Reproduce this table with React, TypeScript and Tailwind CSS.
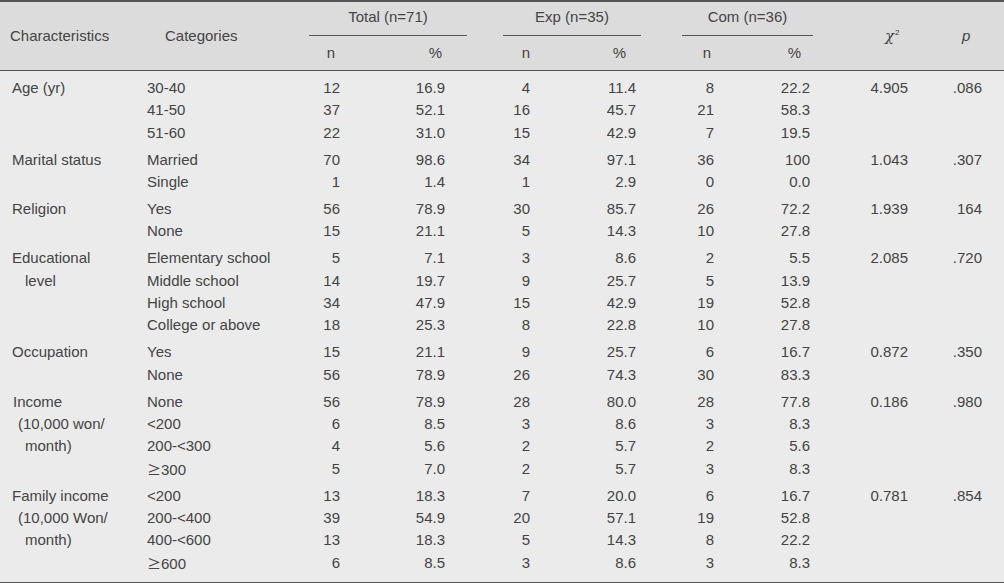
type Row = { cat: string; tn: string; tp: string; en: string; ep: string; cn: string; cp: string };

type Group = {
  label: { text: string; pad: string }[];
  chi: string;
  p: string;
  rows: Row[];
};

const r = (cat: string, tn: string, tp: string, en: string, ep: string, cn: string, cp: string): Row => ({
  cat, tn, tp, en, ep, cn, cp,
});

const groups: Group[] = [
  {
    label: [{ text: "Age (yr)", pad: "pl-[12px]" }],
    chi: "4.905",
    p: ".086",
    rows: [
      r("30-40", "12", "16.9", "4", "11.4", "8", "22.2"),
      r("41-50", "37", "52.1", "16", "45.7", "21", "58.3"),
      r("51-60", "22", "31.0", "15", "42.9", "7", "19.5"),
    ],
  },
  {
    label: [{ text: "Marital status", pad: "pl-[12px]" }],
    chi: "1.043",
    p: ".307",
    rows: [
      r("Married", "70", "98.6", "34", "97.1", "36", "100"),
      r("Single", "1", "1.4", "1", "2.9", "0", "0.0"),
    ],
  },
  {
    label: [{ text: "Religion", pad: "pl-[12px]" }],
    chi: "1.939",
    p: "164",
    rows: [
      r("Yes", "56", "78.9", "30", "85.7", "26", "72.2"),
      r("None", "15", "21.1", "5", "14.3", "10", "27.8"),
    ],
  },
  {
    label: [
      { text: "Educational", pad: "pl-[12px]" },
      { text: "level", pad: "pl-[25px]" },
    ],
    chi: "2.085",
    p: ".720",
    rows: [
      r("Elementary school", "5", "7.1", "3", "8.6", "2", "5.5"),
      r("Middle school", "14", "19.7", "9", "25.7", "5", "13.9"),
      r("High school", "34", "47.9", "15", "42.9", "19", "52.8"),
      r("College or above", "18", "25.3", "8", "22.8", "10", "27.8"),
    ],
  },
  {
    label: [{ text: "Occupation", pad: "pl-[12px]" }],
    chi: "0.872",
    p: ".350",
    rows: [
      r("Yes", "15", "21.1", "9", "25.7", "6", "16.7"),
      r("None", "56", "78.9", "26", "74.3", "30", "83.3"),
    ],
  },
  {
    label: [
      { text: "Income", pad: "pl-[13px]" },
      { text: "(10,000 won/", pad: "pl-[18px]" },
      { text: "month)", pad: "pl-[25px]" },
    ],
    chi: "0.186",
    p: ".980",
    rows: [
      r("None", "56", "78.9", "28", "80.0", "28", "77.8"),
      r("<200", "6", "8.5", "3", "8.6", "3", "8.3"),
      r("200-<300", "4", "5.6", "2", "5.7", "2", "5.6"),
      r("≥300", "5", "7.0", "2", "5.7", "3", "8.3"),
    ],
  },
  {
    label: [
      { text: "Family income", pad: "pl-[12px]" },
      { text: "(10,000 Won/", pad: "pl-[18px]" },
      { text: "month)", pad: "pl-[25px]" },
    ],
    chi: "0.781",
    p: ".854",
    rows: [
      r("<200", "13", "18.3", "7", "20.0", "6", "16.7"),
      r("200-<400", "39", "54.9", "20", "57.1", "19", "52.8"),
      r("400-<600", "13", "18.3", "5", "14.3", "8", "22.2"),
      r("≥600", "6", "8.5", "3", "8.6", "3", "8.3"),
    ],
  },
];

// the ≥ in the source is a full-width glyph
const Category = ({ text }: { text: string }) =>
  text.startsWith("≥") ? (
    <div>
      <span className="font-['Noto_Sans_CJK_KR',sans-serif] text-[14px]">≥</span>
      {text.slice(1)}
    </div>
  ) : (
    <div>{text}</div>
  );

const HeadGroup = ({ title, width, nw, pr }: { title: string; width: string; nw: string; pr: string }) => (
  <div className={`flex flex-col ${width}`}>
    <div className="h-[33px] flex items-center justify-center pb-[3px]">{title}</div>
    <div className="h-px bg-[#555]" />
    <div className="h-[34px] flex items-center">
      <div className={`${nw} text-center`}>n</div>
      <div className={`flex-1 text-right ${pr}`}>%</div>
    </div>
  </div>
);

const App = () => {
  return (
    <div className="w-[1004px] h-[583px] bg-[#ebebeb] text-[#444] text-[15px] font-['Liberation_Sans',Arial,sans-serif] overflow-hidden">
      <header className="flex h-[71px] bg-[#dcdcdc] border-t-2 border-b border-[#555]">
        <div className="w-[155px] pl-[10px] flex items-center">Characteristics</div>
        <div className="w-[154px] pl-[10px] flex items-center">Categories</div>
        <HeadGroup title="Total (n=71)" width="w-[158px]" nw="w-[44px]" pr="pr-[25px]" />
        <div className="w-[36px]" />
        <HeadGroup title="Exp (n=35)" width="w-[138px]" nw="w-[46px]" pr="pr-[15px]" />
        <div className="w-[41px]" />
        <HeadGroup title="Com (n=36)" width="w-[131px]" nw="w-[50px]" pr="pr-[12px]" />
        <div className="w-[140px] pl-[72px] flex items-center">
          <span className="italic font-['DejaVu_Serif',serif] text-[15px]">χ</span>
          <span className="text-[8px] -translate-y-[3px] ml-[1px]">2</span>
        </div>
        <div className="flex-1 pl-[9px] flex items-center">
          <span className="italic">p</span>
        </div>
      </header>

      <main className="flex flex-col gap-[4.5px] pt-[6px] pb-[7.5px] border-b-2 border-[#555]">
        {groups.map((g, gi) => (
          <div key={gi} className="flex">
            <div className="w-[147px] flex flex-col">
              {g.label.map((l, li) => (
                <div key={li} className={`h-[22.4px] leading-[22.4px] whitespace-nowrap ${l.pad}`}>
                  {l.text}
                </div>
              ))}
            </div>
            <div className="flex flex-col">
              {g.rows.map((row, ri) => (
                <div
                  key={ri}
                  className="grid grid-cols-[143px_50px_105px_85px_106px_78px_96px_98px_74px] h-[22.4px] leading-[22.4px] whitespace-nowrap"
                >
                  <Category text={row.cat} />
                  <div className="text-right">{row.tn}</div>
                  <div className="text-right">{row.tp}</div>
                  <div className="text-right">{row.en}</div>
                  <div className="text-right">{row.ep}</div>
                  <div className="text-right">{row.cn}</div>
                  <div className="text-right">{row.cp}</div>
                  <div className="text-right">{ri === 0 ? g.chi : ""}</div>
                  <div className="text-right">{ri === 0 ? g.p : ""}</div>
                </div>
              ))}
            </div>
          </div>
        ))}
      </main>
    </div>
  );
};

export default App;
